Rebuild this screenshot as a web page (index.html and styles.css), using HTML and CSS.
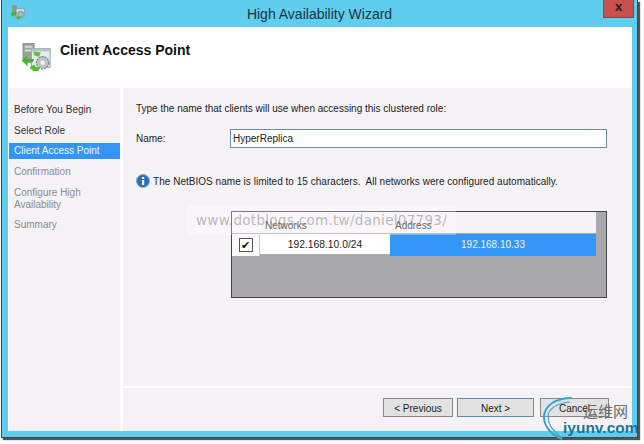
FILE: index.html
```html
<!DOCTYPE html>
<html lang="en">
<head>
  <meta charset="UTF-8">
  <title>High Availability Wizard</title>
  <link rel="stylesheet" href="styles.css">
</head>
<body>

  <div class="window">

    <!-- title bar -->
    <div class="titlebar">
      <svg class="app-icon" width="16" height="17" viewBox="0 0 18 18">
        <rect x="2" y="1" width="6" height="12" fill="#8a9a8c"/>
        <rect x="7" y="5" width="9" height="9" fill="#d8e2e6" stroke="#7f959c" stroke-width="0.7"/>
        <circle cx="12" cy="11" r="3.4" fill="#a9b8bb" stroke="#7f8d90"/>
        <path d="M1 11 L4 8 L7 9 L7 12 L4 11 L3 14 Z" fill="#43b02f"/>
        <path d="M6 15 L10 17 L13 14 L9 13 Z" fill="#4dbb35"/>
      </svg>
      <span class="title">High Availability Wizard</span>
      <div class="close">x</div>
    </div>

    <!-- wizard header -->
    <div class="header">
      <svg class="page-icon" width="30" height="30" viewBox="0 0 32 32">
        <rect x="1" y="0" width="12" height="20" fill="#9aa39c" stroke="#6f7a72" stroke-width="0.6"/>
        <rect x="3" y="3" width="8" height="2" fill="#d9dedb"/>
        <rect x="3" y="7" width="8" height="2" fill="#d9dedb"/>
        <rect x="10" y="6" width="20" height="20" fill="#e3ecef" stroke="#8ea3ab"/>
        <rect x="10" y="6" width="20" height="3" fill="#b4c6cd"/>
        <circle cx="22" cy="21" r="6.5" fill="#b9c4c6" stroke="#7d8a8d" stroke-width="1.4" stroke-dasharray="2.2 1"/>
        <circle cx="22" cy="21" r="2.4" fill="#eef2f2"/>
        <path d="M0 19 L5 13 L6 17 L13 17 L11 21 L6 21 L6 25 Z" fill="#45b52f"/>
        <path d="M8 26 L13 23 L15 26 L20 25 L17 30 L12 30 L11 29 Z" fill="#4fc034"/>
        <path d="M12 9 L20 10 L18 15 L13 13 Z" fill="#5ac43c"/>
      </svg>
      <h1>Client Access Point</h1>
    </div>

    <div class="body">

      <!-- steps -->
      <ul class="steps">
        <li>Before You Begin</li>
        <li>Select Role</li>
        <li class="current">Client Access Point</li>
        <li class="off">Confirmation</li>
        <li class="off">Configure High<br>Availability</li>
        <li class="off">Summary</li>
      </ul>

      <div class="main">
        <div class="content">
          <p class="intro">Type the name that clients will use when accessing this clustered role:</p>

          <div class="name-row">
            <label for="role">Name:</label>
            <input type="text" id="role" value="HyperReplica">
          </div>

          <div class="info">
            <svg width="14" height="14" viewBox="0 0 14 14">
              <circle cx="7" cy="7" r="6.5" fill="#2f6fc0" stroke="#8fa5bd"/>
              <rect x="6" y="6" width="2.2" height="5" fill="#fff"/>
              <rect x="6" y="3" width="2.2" height="2" fill="#fff"/>
            </svg>
            <span>The NetBIOS name is limited to 15 characters.&nbsp; All networks were configured automatically.</span>
          </div>

          <div class="grid">
            <div class="grid-cols grid-head">
              <div></div>
              <div class="col-net">Networks</div>
              <div class="col-addr">Address</div>
            </div>
            <div class="grid-cols grid-row">
              <div class="cell-check"><span class="checkbox">&#10004;</span></div>
              <div class="cell-net">192.168.10.0/24</div>
              <div class="cell-addr">192.168.10.33</div>
            </div>
          </div>
        </div>

        <div class="buttons">
          <button type="button" class="prev">&lt; Previous</button>
          <button type="button" class="next">Next &gt;</button>
          <button type="button" class="cancel">Cancel</button>
        </div>
      </div>
    </div>
  </div>

  <!-- watermarks lying over the window -->
  <div class="mark-url">www.dotblogs.com.tw/daniel07793/</div>
  <div class="mark-logo">
    <svg width="40" height="46" viewBox="0 0 40 46">
      <path d="M32 1 C14 1 4 10 4 20 C4 30 12 38 22 42" fill="none" stroke="#3fa3c9" stroke-width="2"/>
      <path d="M30 5 C17 6 8 12 8 20 C8 28 14 35 22 41" fill="none" stroke="#3fa3c9" stroke-width="1.2"/>
    </svg>
    <span class="logo-cn">运维网</span>
    <span class="logo-en">iyunv.com</span>
  </div>

</body>
</html>
```

FILE: styles.css
```css
html, body {
  margin: 0;
  padding: 0;
}

body {
  width: 644px;
  height: 444px;
  overflow: hidden;
  position: relative;
  background: #fff;
  font-family: "Liberation Sans", Arial, sans-serif;
  font-size: 10px;
  color: #222;
}

.window {
  width: 635px;
  height: 437px;
  margin-left: 1px;
  border: 1px solid #3c4a50;
  border-top: none;
  background: #5fcdee;
  box-shadow: 2px 2px 1px #555;
  display: flex;
  flex-direction: column;
}

.titlebar {
  height: 27px;
  flex: none;
  display: flex;
  align-items: center;
  justify-content: center;
  position: relative;
}

.title {
  font-size: 14px;
  color: #1d3340;
}

.app-icon {
  position: absolute;
  left: 8px;
  top: 4px;
}

.close {
  position: absolute;
  right: 3px;
  top: -1px;
  width: 31px;
  height: 19px;
  background: #c75050;
  border: 1px solid #7c4a48;
  box-sizing: border-box;
  text-align: center;
  font-size: 13px;
  font-weight: bold;
  line-height: 14px;
  color: #222;
}

.header {
  height: 60px;
  flex: none;
  margin: 0 5px 0 6px;
  background: #fff;
  display: flex;
  align-items: flex-start;
  box-sizing: border-box;
  padding: 16px 0 0 14px;
}

.header h1 {
  margin: -1px 0 0 8px;
  font-size: 14px;
  line-height: 16px;
  font-weight: bold;
  color: #111;
}

.body {
  flex: 1;
  margin: 0 5px 6px 6px;
  display: flex;
  background: #fff;
  padding-top: 1px;
}

.steps {
  width: 111px;
  flex: none;
  margin: 0 3px 0 1px;
  padding: 14px 0 0;
  list-style: none;
  background: #f5f2f6;
}

.steps li {
  padding: 2px 0 2px 5px;
  line-height: 12px;
  margin-bottom: 4.7px;
  color: #333;
}

.steps li.current {
  background: #3396f5;
  color: #eef6ff;
}

.steps li.off {
  color: #8b8b8b;
}

.main {
  flex: 1;
  display: flex;
  flex-direction: column;
}

.content {
  flex: 1;
  background: #f5f2f6;
  padding: 15px 0 0 13px;
}

.intro {
  margin: 0;
  line-height: 12px;
}

.name-row {
  display: flex;
  align-items: center;
  margin-top: 14px;
}

.name-row label {
  width: 94px;
}

.name-row input {
  width: 377px;
  height: 19px;
  box-sizing: border-box;
  padding: 0 2px;
  border: 1px solid #6c8aa0;
  background: #fff;
  font-family: inherit;
  font-size: 10px;
  color: #222;
}

.info {
  display: flex;
  align-items: center;
  gap: 3px;
  margin-top: 26px;
  letter-spacing: 0.03px;
}

.grid {
  width: 376px;
  height: 87px;
  box-sizing: border-box;
  margin: 23px 0 0 95px;
  border: 1px solid #444;
  background: #a9a8aa;
  padding: 0 10px 0 0;
}

.grid-cols {
  display: grid;
  grid-template-columns: 28px 130px 1fr;
}

.grid-head {
  height: 21px;
  line-height: 27px;
  background: #f5f2f6;
}

.col-net,
.col-addr {
  padding-left: 5px;
}

.grid-row {
  height: 20px;
  line-height: 22px;
  background: #fff;
  text-align: center;
  margin-top: 1px;
}

.cell-check {
  display: flex;
  align-items: center;
  justify-content: center;
  background: #fbfafb;
  border-right: 1px solid #ccc;
  box-sizing: border-box;
}

.checkbox {
  width: 12px;
  height: 12px;
  border: 1px solid #555;
  background: #fff;
  font-size: 11px;
  line-height: 12px;
  color: #111;
}

.cell-net {
  font-size: 10.3px;
}

.cell-addr {
  background: #3396f5;
  color: #eef6ff;
}

.buttons {
  height: 43px;
  flex: none;
  margin-top: 2px;
  background: #f5f2f6;
  display: flex;
  justify-content: flex-end;
  padding: 10px 23px 0 0;
  box-sizing: border-box;
}

.buttons button {
  height: 19px;
  padding: 1px 0 0;
  border: 1px solid #888;
  background: #e2e2e2;
  font-family: inherit;
  font-size: 10px;
  color: #222;
}

.prev {
  width: 70px;
}

.buttons .next {
  width: 77px;
  margin: 0 6px 0 4px;
  border-color: #5f8dae;
}

.cancel {
  width: 69px;
}

.mark-url {
  position: absolute;
  left: 187px;
  top: 205px;
  padding: 7px 9px;
  background: rgba(255, 255, 255, 0.3);
  font-family: "DejaVu Sans", sans-serif;
  font-size: 13.5px;
  line-height: 16px;
  letter-spacing: 0.3px;
  color: rgba(120, 120, 120, 0.5);
  white-space: nowrap;
}

.mark-logo {
  position: absolute;
  left: 540px;
  top: 397px;
  width: 104px;
  height: 47px;
}

.mark-logo svg {
  position: absolute;
  left: 0;
  top: 0;
}

.logo-cn {
  position: absolute;
  left: 43px;
  top: 5px;
  font-family: "Noto Sans CJK SC", sans-serif;
  font-size: 15px;
  line-height: 18px;
  color: #6b6b6b;
}

.logo-en {
  position: absolute;
  left: 23px;
  top: 23px;
  font-size: 15.5px;
  font-weight: bold;
  line-height: 15px;
  color: #16749f;
}
```
